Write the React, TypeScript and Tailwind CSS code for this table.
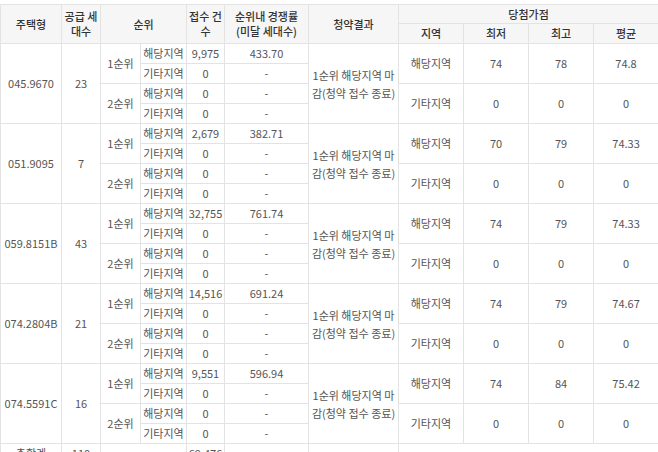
import React from "react";

type Group = {
  type: string;
  supply: string;
  count: string;
  rate: string;
  min: string;
  max: string;
  avg: string;
};

const groups: Group[] = [
  { type: "045.9670", supply: "23", count: "9,975", rate: "433.70", min: "74", max: "78", avg: "74.8" },
  { type: "051.9095", supply: "7", count: "2,679", rate: "382.71", min: "70", max: "79", avg: "74.33" },
  { type: "059.8151B", supply: "43", count: "32,755", rate: "761.74", min: "74", max: "79", avg: "74.33" },
  { type: "074.2804B", supply: "21", count: "14,516", rate: "691.24", min: "74", max: "79", avg: "74.67" },
  { type: "074.5591C", supply: "16", count: "9,551", rate: "596.94", min: "74", max: "84", avg: "75.42" },
];

const td = "border border-[#e3e3e3] text-center align-middle p-0";
const th = "border border-[#e3e3e3] bg-[#f6f6f6] text-center align-middle font-medium text-[#333] p-0 leading-[15px]";

export default function App() {
  return (
    <div className="w-[658px] h-[452px] overflow-hidden bg-white pt-[4px]" style={{ fontFamily: '"Noto Sans CJK KR", "Noto Sans", sans-serif' }}>
      <table className="w-[658px] border-collapse table-fixed text-[11px] text-[#555]">
        <colgroup>
          <col className="w-[61px]" />
          <col className="w-[39px]" />
          <col className="w-[40px]" />
          <col className="w-[46px]" />
          <col className="w-[38px]" />
          <col className="w-[84px]" />
          <col className="w-[90px]" />
          <col className="w-[65px]" />
          <col className="w-[65px]" />
          <col className="w-[65px]" />
          <col className="w-[65px]" />
        </colgroup>
        <thead>
          <tr className="h-[19px]">
            <th rowSpan={2} className={th}>주택형</th>
            <th rowSpan={2} className={th}>공급 세<br />대수</th>
            <th rowSpan={2} colSpan={2} className={th}>순위</th>
            <th rowSpan={2} className={th}>접수 건<br />수</th>
            <th rowSpan={2} className={th}>순위내 경쟁률<br />(미달 세대수)</th>
            <th rowSpan={2} className={th}>청약결과</th>
            <th colSpan={4} className={th}>당첨가점</th>
          </tr>
          <tr className="h-[20px] border-b border-[#cfcfcf]">
            <th className={th}>지역</th>
            <th className={th}>최저</th>
            <th className={th}>최고</th>
            <th className={th}>평균</th>
          </tr>
        </thead>
        <tbody>
          {groups.map((g) => (
            <React.Fragment key={g.type}>
              <tr className="h-[20px]">
                <td rowSpan={4} className={td}>{g.type}</td>
                <td rowSpan={4} className={td}>{g.supply}</td>
                <td rowSpan={2} className={td}>1순위</td>
                <td className={td}>해당지역</td>
                <td className={td}>{g.count}</td>
                <td className={td}>{g.rate}</td>
                <td rowSpan={4} className={`${td} leading-[18px]`}>1순위 해당지역 마<br />감(청약 접수 종료)</td>
                <td rowSpan={2} className={td}>해당지역</td>
                <td rowSpan={2} className={td}>{g.min}</td>
                <td rowSpan={2} className={td}>{g.max}</td>
                <td rowSpan={2} className={td}>{g.avg}</td>
              </tr>
              <tr className="h-[20px]">
                <td className={td}>기타지역</td>
                <td className={td}>0</td>
                <td className={td}>-</td>
              </tr>
              <tr className="h-[20px]">
                <td rowSpan={2} className={td}>2순위</td>
                <td className={td}>해당지역</td>
                <td className={td}>0</td>
                <td className={td}>-</td>
                <td rowSpan={2} className={td}>기타지역</td>
                <td rowSpan={2} className={td}>0</td>
                <td rowSpan={2} className={td}>0</td>
                <td rowSpan={2} className={td}>0</td>
              </tr>
              <tr className="h-[20px]">
                <td className={td}>기타지역</td>
                <td className={td}>0</td>
                <td className={td}>-</td>
              </tr>
            </React.Fragment>
          ))}
          <tr className="h-[20px]">
            <td className={td}>총합계</td>
            <td className={td}>110</td>
            <td colSpan={2} className={td}></td>
            <td className={td}>69,476</td>
            <td className={td}></td>
            <td className={td}></td>
            <td colSpan={4} className={td}></td>
          </tr>
        </tbody>
      </table>
    </div>
  );
}
